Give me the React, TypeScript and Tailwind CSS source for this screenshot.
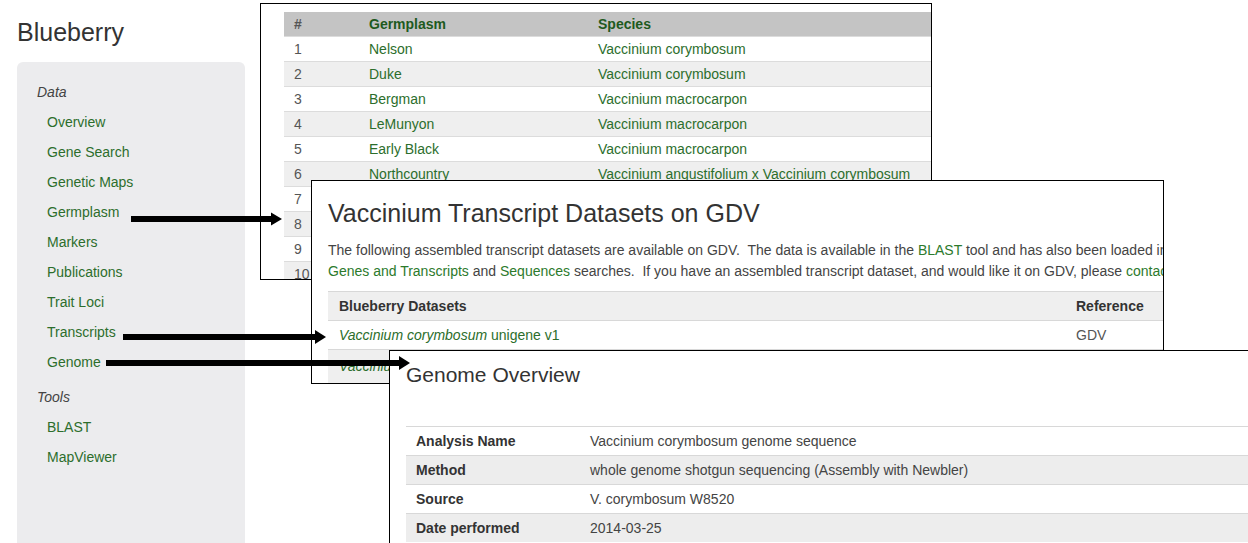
import React from "react";

const dataLinks = [
  "Overview",
  "Gene Search",
  "Genetic Maps",
  "Germplasm",
  "Markers",
  "Publications",
  "Trait Loci",
  "Transcripts",
  "Genome",
];
const toolLinks = ["BLAST", "MapViewer"];

const germplasm: [string, string, string][] = [
  ["1", "Nelson", "Vaccinium corymbosum"],
  ["2", "Duke", "Vaccinium corymbosum"],
  ["3", "Bergman", "Vaccinium macrocarpon"],
  ["4", "LeMunyon", "Vaccinium macrocarpon"],
  ["5", "Early Black", "Vaccinium macrocarpon"],
  ["6", "Northcountry", "Vaccinium angustifolium x Vaccinium corymbosum"],
  ["7", "Northsky", "Vaccinium angustifolium x Vaccinium corymbosum"],
  ["8", "Bluecrop", "Vaccinium corymbosum"],
  ["9", "Jersey", "Vaccinium corymbosum"],
  ["10", "Stevens", "Vaccinium macrocarpon"],
];

const genome: [string, string][] = [
  ["Analysis Name", "Vaccinium corymbosum genome sequence"],
  ["Method", "whole genome shotgun sequencing (Assembly with Newbler)"],
  ["Source", "V. corymbosum W8520"],
  ["Date performed", "2014-03-25"],
];

export default function App() {
  return (
    <div className="relative w-[1248px] h-[543px] overflow-hidden bg-white font-['Liberation_Sans',Arial,sans-serif] text-[#333]">
      {/* Left column: heading + sidebar */}
      <div className="flex flex-col h-full pl-[17px]">
        <h1 className="h-[62px] pt-[17px] text-[25px] leading-[30px] font-normal text-[#333]">
          Blueberry
        </h1>
        <nav className="w-[228px] flex-1 bg-[#ececee] rounded-t-[6px] pt-[15px] text-[14px] leading-[30px]">
          <div className="pl-[20px] italic text-[#444]">Data</div>
          {dataLinks.map((l) => (
            <div key={l} className="pl-[30px] text-[#2c6e2c]">
              {l}
            </div>
          ))}
          <div className="pl-[20px] mt-[5px] italic text-[#444]">Tools</div>
          {toolLinks.map((l) => (
            <div key={l} className="pl-[30px] text-[#2c6e2c]">
              {l}
            </div>
          ))}
        </nav>
      </div>

      {/* Window 1: Germplasm table */}
      <div className="absolute left-[260px] top-[3px] w-[672px] h-[277px] border border-black bg-white overflow-hidden pl-[23px] pt-[8px]">
        <div className="text-[14px]">
          <div className="flex h-[24px] items-center bg-[#c4c4c4] font-bold text-[#1e5a1e]">
            <div className="w-[75px] pl-[10px] text-[#555]">#</div>
            <div className="w-[229px] pl-[10px]">Germplasm</div>
            <div className="flex-1 pl-[10px]">Species</div>
          </div>
          {germplasm.map(([n, g, s], i) => (
            <div
              key={n}
              className={
                "flex h-[25px] items-center border-t border-[#dcdcdc] " +
                (i % 2 === 1 ? "bg-[#efefef]" : "bg-white")
              }
            >
              <div className="w-[75px] pl-[10px] text-[#555]">{n}</div>
              <div className="w-[229px] pl-[10px] text-[#2c6e2c] whitespace-nowrap">{g}</div>
              <div className="flex-1 pl-[10px] text-[#2c6e2c] whitespace-nowrap">{s}</div>
            </div>
          ))}
        </div>
      </div>

      {/* Window 2: Transcript datasets */}
      <div className="absolute left-[311px] top-[180px] w-[853px] h-[204px] border border-black bg-white overflow-hidden pl-[16px] pt-[17px]">
        <h2 className="text-[25px] leading-[30px] font-normal text-[#333] whitespace-nowrap">
          Vaccinium Transcript Datasets on GDV
        </h2>
        <div className="mt-[12px] text-[14px] leading-[21px] text-[#444] whitespace-nowrap">
          <div>
            The following assembled transcript datasets are available on GDV.&nbsp; The data is available in the{" "}
            <span className="text-[#2c7a2c]">BLAST</span> tool and has also been loaded into the
          </div>
          <div>
            <span className="text-[#2c7a2c]">Genes and Transcripts</span> and{" "}
            <span className="text-[#2c7a2c]">Sequences</span> searches.&nbsp; If you have an assembled transcript
            dataset, and would like it on GDV, please <span className="text-[#2c7a2c]">contact us</span>.
          </div>
        </div>
        <div className="mt-[9px] w-[1000px] text-[14px]">
          <div className="flex h-[29px] items-center border-t border-[#d8d8d8] bg-[#efefef] font-bold text-[#333]">
            <div className="w-[738px] pl-[11px]">Blueberry Datasets</div>
            <div className="pl-[10px]">Reference</div>
          </div>
          <div className="flex h-[29px] items-center border-t border-[#d8d8d8] bg-white">
            <div className="w-[738px] pl-[11px] text-[#2c6e2c]">
              <i>Vaccinium corymbosum</i> unigene v1
            </div>
            <div className="pl-[10px] text-[#555]">GDV</div>
          </div>
          <div className="flex h-[34px] items-center border-t border-[#d8d8d8] bg-[#efefef]">
            <div className="w-[738px] pl-[11px] text-[#2c6e2c]">
              <i>Vaccinium darrowii</i> unigene v1
            </div>
            <div className="pl-[10px] text-[#555]">GDV</div>
          </div>
        </div>
      </div>

      {/* Window 3: Genome overview */}
      <div className="absolute left-[389px] top-[350px] w-[900px] h-[250px] border border-black bg-white overflow-hidden pl-[16px] pt-[11px]">
        <h2 className="text-[21px] leading-[26px] font-normal text-[#333]">Genome Overview</h2>
        <div className="mt-[38px] text-[14px]">
          {genome.map(([k, v], i) => (
            <div
              key={k}
              className={
                "flex h-[29px] items-center border-t border-[#d8d8d8] " +
                (i % 2 === 1 ? "bg-[#ededed]" : "bg-white")
              }
            >
              <div className="w-[184px] pl-[10px] font-bold text-[#333]">{k}</div>
              <div className="text-[#444] whitespace-nowrap">{v}</div>
            </div>
          ))}
        </div>
      </div>

      {/* Arrows */}
      <svg className="absolute inset-0 pointer-events-none" width="1248" height="543" viewBox="0 0 1248 543">
        <rect x="131" y="216" width="141" height="6" fill="#000" />
        <polygon points="271,212.5 282,219 271,225.5" fill="#000" />
        <rect x="123" y="334" width="193" height="6" fill="#000" />
        <polygon points="315,330 326,337 315,344" fill="#000" />
        <rect x="106" y="360" width="295" height="6" fill="#000" />
        <polygon points="399,356 410,363 399,370" fill="#000" />
      </svg>
    </div>
  );
}
